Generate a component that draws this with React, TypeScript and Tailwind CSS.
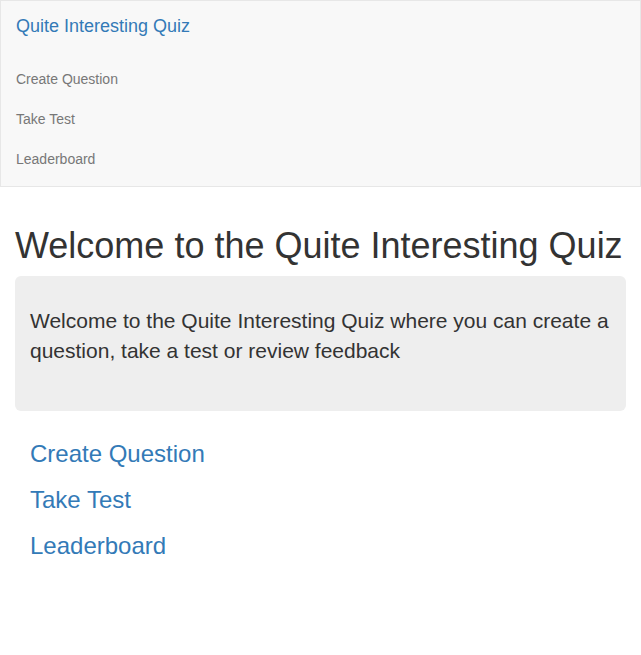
export default function App() {
  const links = ["Create Question", "Take Test", "Leaderboard"];

  return (
    <div className="min-h-[655px] bg-white text-[#333] text-[14px] leading-[20px] font-['Liberation_Sans',Arial,sans-serif]">
      {/* Navbar */}
      <nav className="border border-[#e7e7e7] bg-[#f8f8f8]">
        <div className="h-[50px] px-[15px] py-[15px] text-[18px] leading-[20px]">
          <a href="#" className="text-[#337ab7]">
            Quite Interesting Quiz
          </a>
        </div>
        <ul className="my-[7.5px]">
          {links.map((l) => (
            <li key={l}>
              <a href="#" className="block px-[15px] py-[10px] leading-[20px] text-[#777]">
                {l}
              </a>
            </li>
          ))}
        </ul>
      </nav>

      {/* Content */}
      <div className="px-[15px] pt-[39px]">
        <h1 className="text-[36px] leading-[1.1] font-medium mb-[10px]">
          Welcome to the Quite Interesting Quiz
        </h1>
        <div className="rounded-[6px] bg-[#eee] px-[15px] py-[30px]">
          <p className="text-[21px] leading-[30px] font-extralight mb-[15px]">
            Welcome to the Quite Interesting Quiz where you can create a question, take a test or
            review feedback
          </p>
        </div>
        <ul className="mt-[20px]">
          {links.map((l) => (
            <li key={l}>
              <a href="#" className="block px-[15px] py-[10px] text-[24px] leading-[26.4px] text-[#337ab7]">
                {l}
              </a>
            </li>
          ))}
        </ul>
      </div>
    </div>
  );
}
